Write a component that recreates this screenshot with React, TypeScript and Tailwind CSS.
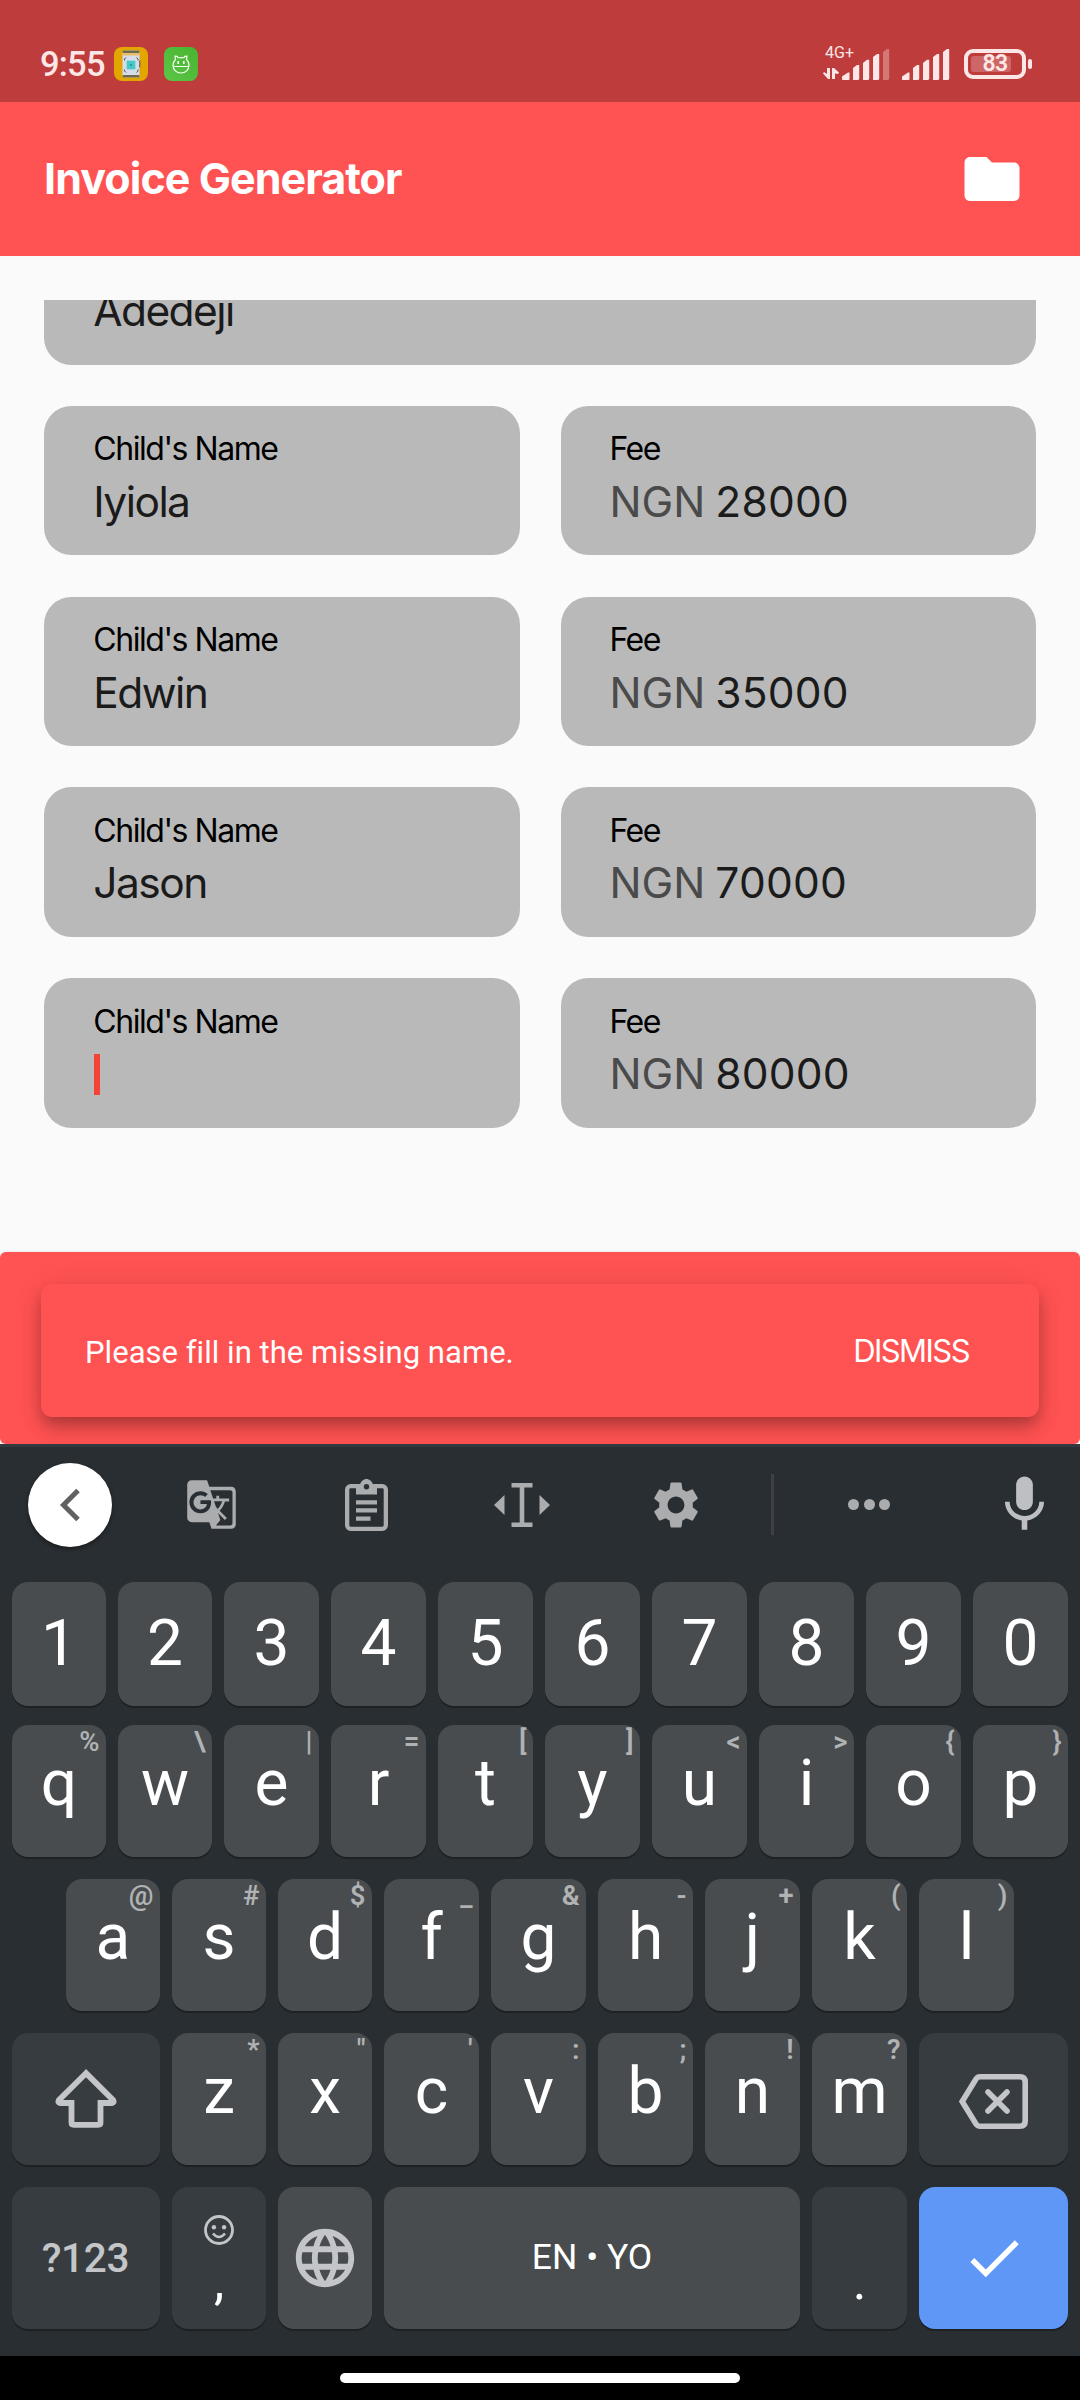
import React from "react";
import {
  MdCheck,
  MdFolder,
  MdGTranslate,
  MdLanguage,
  MdMic,
  MdSettings,
} from "react-icons/md";

/* ---------- Status bar ---------- */

function ScannerAppIcon() {
  return (
    <svg className="mt-[47px] ml-[8px] h-[34px] w-[34px]" viewBox="0 0 34 34">
      <rect width="34" height="34" rx="8" fill="#e3a600" />
      <rect x="8.5" y="3.5" width="17" height="27" rx="1.5" fill="#d5dcea" />
      <rect x="8.5" y="3.5" width="17" height="2.6" rx="1" fill="#6f6a48" />
      <rect x="9" y="6.1" width="16" height="2.4" fill="#e8bd63" />
      <rect x="8.5" y="28" width="17" height="2.6" rx="1" fill="#6f6a48" />
      <path
        d="M10.5 13.500v-1.500l1.500-1.500M22.500 10.500l1.500 1.500v1.500M10.500 22.500v1.500l1.500 1.500M22.500 25.500l1.500-1.500v-1.500M25.800 13.500v7"
        fill="none"
        stroke="#4d5568"
      />
      <rect x="12.7" y="13.7" width="8.6" height="8.6" fill="#46c8c6" />
      <rect x="16" y="17.2" width="2" height="1.6" fill="#1f8f8d" />
    </svg>
  );
}

function CatAppIcon() {
  return (
    <svg className="mt-[47px] ml-[16px] h-[34px] w-[34px]" viewBox="0 0 34 34">
      <defs>
        <linearGradient id="cat" x1="0" y1="1" x2="1" y2="0">
          <stop offset="0" stopColor="#5cc648" />
          <stop offset="1" stopColor="#48b42f" />
        </linearGradient>
      </defs>
      <rect width="34" height="34" rx="8" fill="url(#cat)" />
      <g fill="none" stroke="#f4fff0" strokeWidth="1.2">
        <path d="M9 19.500h16M11.500 12.500l-.5-3.300 2.300.2.800 1.300h5.800l.8-1.300 2.300-.2-.5 3.300c1.500 1.500 2.500 3.500 2.500 5.500 0 5-3.700 8-8 8s-8-3-8-8c0-2 1-4 2.500-5.500z" />
        <path d="M14.200 14v3M19.800 14v3" strokeWidth="1.6" />
      </g>
    </svg>
  );
}

function SignalBars({ weak }: { weak?: boolean }) {
  return (
    <svg className="h-[32px] w-[48px]" viewBox="0 0 48 32" fill="#fce6e6">
      <path d="M0 30.500v-3l6-4h1.500v7l-1 .5H.5z" />
      <path d="M11 31v-12l4-3h2.200v14l-1 1z" />
      <path d="M21 31v-17l4-3.300h2.200v19.300l-1 1z" />
      <path d="M31 31v-23l4-3h2.200v25l-1 1z" />
      <path d="M41 31v-28l4-3h2.200v30l-1 1z" opacity={weak ? 0.35 : 1} />
    </svg>
  );
}

function StatusBar() {
  return (
    <div className="flex h-[102px] items-start bg-[#be3c3c] font-['Roboto',sans-serif] text-[#fce6e6]">
      <span className="mt-[46px] ml-[40px] w-[66px] text-[34.5px] leading-[36px] font-medium tracking-[-0.8px]">
        9:55
      </span>
      <ScannerAppIcon />
      <CatAppIcon />
      <div className="mt-[43px] ml-auto flex w-[19px] flex-col">
        <span className="ml-[2px] text-[16px] leading-[20px]">4G+</span>
        <svg className="mt-[4px] h-[13px] w-[17px]" viewBox="0 0 17 13" fill="#fce6e6">
          <path d="M7 1v11H5L0 6.500 1 5l3 2V1zM9 12V1h2l5 4.500-1 1.500-3-.5V12z" />
        </svg>
      </div>
      <div className="mt-[49px] flex">
        <SignalBars weak />
      </div>
      <div className="mt-[49px] ml-[12px] flex">
        <SignalBars />
      </div>
      <div className="mt-[49px] mr-[48px] ml-[14px] flex items-center">
        <div className="relative flex h-[30px] w-[62px] items-center justify-center rounded-[9px] border-4 border-[#fce6e6]">
          <div className="absolute top-[3px] left-[3px] h-[16px] w-[40px] rounded-[3px] bg-[#fce6e6]/25" />
          <span className="relative text-[23px] leading-[22px] font-semibold tracking-[-0.6px]">83</span>
        </div>
        <div className="ml-[2px] h-[10px] w-[4px] rounded-[2px] bg-[#fce6e6]" />
      </div>
    </div>
  );
}

/* ---------- App ---------- */

function Header() {
  return (
    <header className="flex h-[154px] items-center justify-between bg-[#ff5252] pr-[55px] pl-[44px] text-white">
      <h1 className="pb-[1px] font-['Inter',sans-serif] text-[43px] leading-none font-bold tracking-[-0.94px]">
        Invoice Generator
      </h1>
      <MdFolder size={66} />
    </header>
  );
}

function NameField({ value }: { value: string | null }) {
  return (
    <div className="flex h-[149.5px] flex-1 flex-col rounded-[27.5px] bg-[#b9b9b9] pt-[27.5px] pl-[49.3px]">
      <span className="text-[32px] leading-none tracking-[-1.45px] text-black">Child's Name</span>
      {value === null ? (
        <span className="mt-[16.3px] ml-[0.7px] h-[41.5px] w-[5.7px] bg-[#f44336]" />
      ) : (
        <span className="mt-[14.6px] text-[42.5px] leading-[44px] tracking-[-1.55px] text-[#1b1b1b]">
          {value}
        </span>
      )}
    </div>
  );
}

function FeeField({ value }: { value: string }) {
  return (
    <div className="flex h-[149.5px] flex-1 flex-col rounded-[27.5px] bg-[#b9b9b9] pt-[27.5px] pl-[48.6px]">
      <span className="text-[32px] leading-none tracking-[-1.6px] text-black">Fee</span>
      <span className="mt-[14.6px] flex gap-[10px] text-[42.5px] leading-[44px] text-[#1b1b1b]">
        <span className="text-[#4a4a4a]">NGN</span>
        <span className="tracking-[0.2px]">{value}</span>
      </span>
    </div>
  );
}

const CHILDREN: { name: string | null; fee: string }[] = [
  { name: "Iyiola", fee: "28000" },
  { name: "Edwin", fee: "35000" },
  { name: "Jason", fee: "70000" },
  { name: null, fee: "80000" },
];

function Form() {
  return (
    <main className="flex h-[996px] flex-col px-[44px] pt-[44px] font-['Inter',sans-serif]">
      {/* Scrolled partly under the top edge of the list */}
      <div className="flex h-[64.6px] flex-col justify-end overflow-hidden rounded-b-[27.5px] bg-[#b9b9b9]">
        <div className="flex h-[149.5px] shrink-0 flex-col pt-[74.3px] pl-[49.3px]">
          <span className="text-[42.5px] leading-[44px] tracking-[-1.6px] text-[#1b1b1b]">
            Adedeji
          </span>
        </div>
      </div>
      {CHILDREN.map((c) => (
        <div key={c.fee} className="mt-[41.25px] flex gap-[41.25px]">
          <NameField value={c.name} />
          <FeeField value={c.fee} />
        </div>
      ))}
    </main>
  );
}

function Snackbar() {
  return (
    <div className="h-[192px] bg-[#fafafa]">
      <div className="h-full overflow-hidden rounded-[6px] bg-[#ff5252] px-[41px] pt-[32px] shadow-[0_0_3px_rgba(0,0,0,0.12)]">
        <div className="flex h-[133px] items-center justify-between rounded-[11px] bg-[#ff5252] pr-[70px] pl-[44px] text-white shadow-[0_8px_14px_-3px_rgba(0,0,0,0.2),0_12px_20px_rgba(0,0,0,0.14),0_3px_32px_rgba(0,0,0,0.08)]">
          <span className="pt-[4px] font-['Roboto',sans-serif] text-[31px] leading-none tracking-[0.04px]">
            Please fill in the missing name.
          </span>
          <span className="font-['Inter',sans-serif] text-[31px] leading-none tracking-[-1.55px]">
            DISMISS
          </span>
        </div>
      </div>
    </div>
  );
}

/* ---------- Keyboard ---------- */

function ClipboardIcon() {
  return (
    <svg className="h-[52px] w-[43px]" viewBox="0 0 43 52">
      <rect x="2.15" y="7.15" width="38.7" height="42.7" rx="3.5" fill="none" stroke="#abacae" strokeWidth="4.3" />
      <path d="M11 15.500V5.500h4C16 2.300 18.500 0 21.500 0s5.500 2.300 6.500 5.500h4v10z" fill="#abacae" />
      <circle cx="21.5" cy="7.7" r="2.7" fill="#292e32" />
      <path d="M11 23.300h21M11 31.400h21M11 39.600h14.500" stroke="#abacae" strokeWidth="4.3" />
    </svg>
  );
}

function TextCursorIcon() {
  return (
    <svg className="h-[44px] w-[56px]" viewBox="0 0 56 44" fill="#abacae">
      <path d="M0 22l10.500-10v20zM56 22L45.500 12v20zM17.500 0h21v4.600H30.300v34.800h8.200V44h-21v-4.600h8.200V4.600h-8.200z" />
    </svg>
  );
}

function Toolbar() {
  return (
    <div className="flex h-[115px] items-center text-[#abacae]">
      <div className="ml-[28px] flex h-[84px] w-[84px] items-center justify-center rounded-full bg-white shadow-[0_2px_4px_rgba(0,0,0,0.4)]">
        <svg className="h-[34px] w-[22px]" viewBox="0 0 22 34">
          <path d="M19 2.500L4.500 17 19 31.500" fill="none" stroke="#616161" strokeWidth="5" />
        </svg>
      </div>
      <MdGTranslate size={53} className="ml-[73px]" />
      <div className="ml-[107px] flex">
        <ClipboardIcon />
      </div>
      <div className="ml-[105.5px] flex">
        <TextCursorIcon />
      </div>
      <MdSettings size={56} className="ml-[98.5px]" />
      <div className="ml-[67px] h-[61px] w-[3px] bg-[#3d4145]" />
      <div className="ml-[74px] flex gap-[4.5px]">
        <div className="h-[11px] w-[11px] rounded-full bg-[#abacae]" />
        <div className="h-[11px] w-[11px] rounded-full bg-[#abacae]" />
        <div className="h-[11px] w-[11px] rounded-full bg-[#abacae]" />
      </div>
      <MdMic size={67} className="ml-[100.5px] text-[#bebfc2]" />
    </div>
  );
}

function LetterKey({ label, hint, narrow }: { label: string; hint: string; narrow: boolean }) {
  return (
    <div
      className={
        "relative flex h-[132px] justify-center rounded-[16px] bg-[#484c4e] pt-[27px] text-[64px] leading-none text-white shadow-[0_2px_0_#1d2124] " +
        (narrow ? "w-[94px]" : "w-[95px]")
      }
    >
      {label}
      <span className="absolute top-[3px] right-[6.5px] text-[27.5px] leading-[28px] font-semibold text-[#b0b2b3]">
        {hint}
      </span>
    </div>
  );
}

const DIGITS = ["1", "2", "3", "4", "5", "6", "7", "8", "9", "0"];
const ROW_Q = ["q%", "w\\", "e|", "r=", "t[", "y]", "u<", "i>", "o{", "p}"];
const ROW_A = ["a@", "s#", "d$", "f_", "g&", "h-", "j+", "k(", "l)"];
const ROW_Z = ["z*", 'x"', "c'", "v:", "b;", "n!", "m?"];

/* The first few keys of each row are one pixel narrower so that the row fills the width exactly. */
function LetterKeys({ keys, narrowCount }: { keys: string[]; narrowCount: number }) {
  return (
    <>
      {keys.map((k, i) => (
        <LetterKey key={k} label={k[0]} hint={k[1]} narrow={i < narrowCount} />
      ))}
    </>
  );
}

function Keyboard() {
  return (
    <section className="flex h-[912px] flex-col border-t-[3px] border-[#32393f] bg-[#292e32] font-['Roboto',sans-serif]">
      <Toolbar />
      <div className="mt-[20px] flex gap-[12px] px-[12px]">
        {DIGITS.map((d, i) => (
          <div
            key={d}
            className={
              "flex h-[124px] justify-center rounded-[16px] bg-[#484c4e] pt-[30px] text-[64px] leading-none text-white shadow-[0_2px_0_#1d2124] " +
              (i < 2 ? "w-[94px]" : "w-[95px]")
            }
          >
            {d}
          </div>
        ))}
      </div>
      <div className="mt-[19px] flex gap-[12px] px-[12px]">
        <LetterKeys keys={ROW_Q} narrowCount={2} />
      </div>
      <div className="mt-[22px] flex gap-[12px] px-[66px]">
        <LetterKeys keys={ROW_A} narrowCount={3} />
      </div>
      <div className="mt-[22px] flex gap-[12px] px-[12px]">
        <div className="flex h-[132px] w-[148px] justify-center rounded-[16px] bg-[#373c40] pt-[35px] shadow-[0_2px_0_#1d2124]">
          <svg className="-ml-[1px] h-[60px] w-[62px]" viewBox="0 0 62 60">
            <path
              d="M31 5.200L3.800 32.200Q2.500 34.800 5 35H16.500V54.500Q16.500 56.800 18.800 56.800H43.200Q45.500 56.800 45.500 54.500V35H57Q59.500 34.800 58.200 32.200Z"
              fill="none"
              stroke="#c3c5c8"
              strokeWidth="5.8"
            />
          </svg>
        </div>
        <LetterKeys keys={ROW_Z} narrowCount={2} />
        <div className="flex h-[132px] w-[149px] justify-center rounded-[16px] bg-[#373c40] pt-[41px] shadow-[0_2px_0_#1d2124]">
          <svg className="h-[55px] w-[69px]" viewBox="0 0 69 55">
            <g fill="none" stroke="#c3c5c8" strokeWidth="5.6">
              <path d="M3.200 27.500L17 5Q18.500 2.800 21 2.800H61Q66.200 2.800 66.200 8V47Q66.200 52.200 61 52.200H21Q18.500 52.200 17 50Z" />
              <path d="M29 18l19 19M48 18L29 37" strokeLinecap="round" />
            </g>
          </svg>
        </div>
      </div>
      <div className="mt-[22px] flex gap-[12px] px-[12px]">
        <div className="flex h-[142px] w-[148px] items-center justify-center rounded-[16px] bg-[#373c40] pr-[1px] text-[40.5px] leading-none font-medium tracking-[-0.3px] text-[#c3c5c8] shadow-[0_2px_0_#1d2124]">
          ?123
        </div>
        <div className="flex h-[142px] w-[94px] flex-col items-center rounded-[16px] bg-[#373c40] pt-[28px] shadow-[0_2px_0_#1d2124]">
          <svg className="h-[30px] w-[30px]" viewBox="0 0 30 30">
            <circle cx="15" cy="15" r="13.5" fill="none" stroke="#c3c5c8" strokeWidth="2.8" />
            <circle cx="9.9" cy="12.3" r="2.2" fill="#c3c5c8" />
            <circle cx="20.1" cy="12.3" r="2.2" fill="#c3c5c8" />
            <path d="M9 18.500Q15 25.500 21 18.500" fill="none" stroke="#c3c5c8" strokeWidth="2.6" />
          </svg>
          <span className="mt-[11px] text-[52px] leading-none text-white">,</span>
        </div>
        <div className="flex h-[142px] w-[94px] items-center justify-center rounded-[16px] bg-[#484c4e] text-[#c3c5c8] shadow-[0_2px_0_#1d2124]">
          <MdLanguage size={70} />
        </div>
        <div className="flex h-[142px] flex-1 items-center justify-center rounded-[16px] bg-[#484c4e] text-[35.5px] leading-none text-white shadow-[0_2px_0_#1d2124]">
          EN • YO
        </div>
        <div className="flex h-[142px] w-[95px] justify-center rounded-[16px] bg-[#373c40] pt-[69px] text-[52px] leading-none text-white shadow-[0_2px_0_#1d2124]">
          .
        </div>
        <div className="flex h-[142px] w-[149px] items-center justify-center rounded-[16px] bg-[#5e97f6] text-white shadow-[0_2px_0_#1d2124]">
          <MdCheck size={66} />
        </div>
      </div>
    </section>
  );
}

export default function App() {
  return (
    <div className="flex h-[2400px] w-[1080px] flex-col overflow-hidden bg-[#fafafa]">
      <StatusBar />
      <Header />
      <Form />
      <Snackbar />
      <Keyboard />
      <div className="flex h-[44px] justify-center bg-black pt-[17px]">
        <div className="h-[10px] w-[400px] rounded-[5px] bg-white" />
      </div>
    </div>
  );
}
